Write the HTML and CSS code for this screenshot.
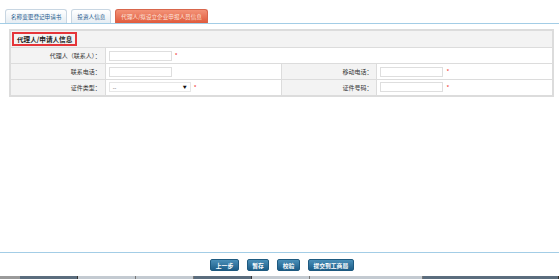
FILE: index.html
```html
<!DOCTYPE html>
<html lang="zh">
<head>
  <meta charset="UTF-8">
  <title>代理人/申请人信息</title>
  <link rel="stylesheet" href="styles.css">
</head>
<body>
  <div class="page">
    <div class="main">
      <div class="tabs">
        <a class="tab">名称变更登记申请书</a>
        <a class="tab">投资人信息</a>
        <a class="tab active">代理人/拟设立企业申报人员信息</a>
      </div>
      <table class="form-table">
        <tr class="head-row">
          <td colspan="4"><span class="title">代理人/申请人信息</span></td>
        </tr>
        <tr>
          <td class="label">代理人（联系人）：</td>
          <td colspan="3"><span class="input"></span><span class="req">*</span></td>
        </tr>
        <tr>
          <td class="label">联系电话：</td>
          <td class="field"><span class="input"></span></td>
          <td class="label">移动电话：</td>
          <td class="field"><span class="input"></span><span class="req">*</span></td>
        </tr>
        <tr>
          <td class="label">证件类型：</td>
          <td class="field"><span class="select"><span>--</span><span class="arrow">▼</span></span><span class="req">*</span></td>
          <td class="label">证件号码：</td>
          <td class="field"><span class="input"></span><span class="req">*</span></td>
        </tr>
      </table>
    </div>
    <div class="footer">
      <div class="buttons">
        <button class="btn">上一步</button>
        <button class="btn">暂存</button>
        <button class="btn">校验</button>
        <button class="btn">提交到工商局</button>
      </div>
      <div class="taskbar">
        <span class="seg gray" style="width:20px"></span>
        <span class="seg dark" style="width:58px"></span>
        <span class="seg light" style="width:58px"></span>
        <span class="seg light" style="width:58px"></span>
        <span class="seg dark" style="width:58px"></span>
        <span class="seg light" style="width:58px"></span>
        <span class="seg light" style="width:113px"></span>
        <span class="seg dark" style="flex:1"></span>
      </div>
    </div>
  </div>
</body>
</html>
```

FILE: styles.css
```css
* { margin: 0; padding: 0; box-sizing: border-box; }
body {
  font-family: "Noto Sans CJK SC", "Liberation Sans", sans-serif;
  font-size: 6px;
  color: #333;
  background: #fff;
}
.page {
  height: 279px;
  display: flex;
  flex-direction: column;
}
.main {
  flex: 1;
}
.tabs {
  display: flex;
  gap: 4px;
  padding: 9px 0 0 5px;
  height: 24px;
  border-bottom: 1px solid #a3cde6;
}
.tab {
  height: 14px;
  padding: 0 5px;
  display: flex;
  align-items: center;
  font-size: 5.6px;
  color: #1d5b8d;
  background: linear-gradient(#ffffff, #e6edf3);
  border: 1px solid #c8d6e2;
  border-bottom: none;
  border-radius: 3px 3px 0 0;
}
.tab.active {
  color: #fde3da;
  background: linear-gradient(#f39277, #e05a3c);
  border-color: #d8664c;
}
.form-table {
  margin: 5px 5px 0 9px;
  width: 545px;
  border-collapse: collapse;
  border: 2px solid #dcdcdc;
}
.form-table td {
  border: 1px solid #dcdcdc;
  height: 16px;
  padding: 0 3px;
  vertical-align: middle;
}
.form-table td.label {
  width: 96px;
  background: #f3f3f3;
  text-align: right;
  padding-right: 4px;
}
.form-table td.field {
  width: 177px;
}
.head-row td {
  background: #f3f3f3;
  padding: 1px 1px;
}
.title {
  display: inline-block;
  border: 2px solid #e5363a;
  padding: 0 3px;
  height: 14px;
  line-height: 10px;
  font-size: 6.6px;
  font-weight: bold;
  color: #222;
}
.input {
  display: inline-block;
  width: 63px;
  height: 10px;
  border: 1px solid #dedede;
  vertical-align: middle;
}
.select {
  display: inline-flex;
  justify-content: space-between;
  align-items: center;
  width: 82px;
  height: 10px;
  padding: 0 3px;
  border: 1px solid #e6e6e6;
  vertical-align: middle;
  font-size: 5px;
}
.arrow {
  font-size: 4px;
  color: #111;
}
.req {
  color: #f03030;
  margin-left: 3px;
  vertical-align: middle;
}
.footer {
  border-top: 1px solid #a3cde6;
}
.buttons {
  display: flex;
  justify-content: center;
  gap: 8px;
  padding: 6px 0 5px 5px;
}
.btn {
  height: 12px;
  padding: 0 4.5px;
  font-family: inherit;
  font-size: 5.8px;
  font-weight: bold;
  color: #fff;
  background: linear-gradient(#4a8fb8, #1c5d88);
  border: 1px solid #1e5a80;
  border-radius: 2px;
}
.taskbar {
  display: flex;
  height: 3px;
}
.seg.gray { background: #9a9a9a; }
.seg.dark { background: #5b6d7e; border-right: 1px solid #333; }
.seg.light { background: #c3cad1; border-right: 1px solid #777; }
```
